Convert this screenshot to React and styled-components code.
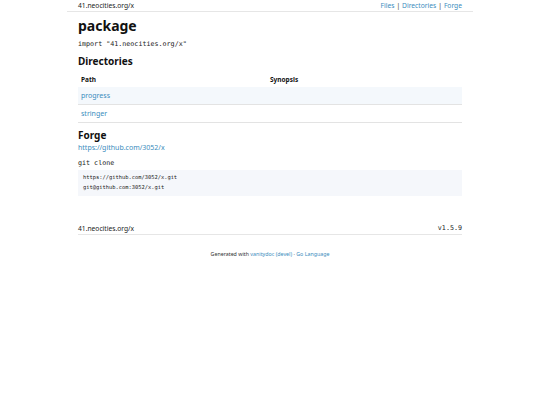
import React from "react";
import styled, { createGlobalStyle } from "styled-components";

const Global = createGlobalStyle`
  html, body { margin: 0; padding: 0; background: #fff; }
  body { font-family: "Noto Sans", "DejaVu Sans", sans-serif; color: #111; }
  a { color: #3a8cbd; text-decoration: none; }
`;

const Header = styled.header`
  width: 406px;
  margin: 0 auto;
  padding: 0 11px;
  box-sizing: border-box;
  height: 12px;
  border-bottom: 1px solid #e6e6e6;
  display: flex;
  justify-content: space-between;
  align-items: center;
  font-size: 6.7px;
  line-height: 11px;
  color: #222;
`;

const Nav = styled.nav`
  display: flex;
  gap: 2px;
  color: #333;
`;

const Main = styled.main`
  width: 384px;
  margin: 0 auto;
`;

const Title = styled.h1`
  font-size: 14px;
  line-height: 16px;
  font-weight: 700;
  margin: 6px 0 0;
`;

const Mono = styled.div`
  font-family: "DejaVu Sans Mono", monospace;
  font-size: 6.7px;
  line-height: 10px;
  margin-top: ${(p) => p.$mt}px;
  color: #222;
`;

const Heading = styled.h2`
  font-size: 10px;
  line-height: 12px;
  font-weight: 700;
  margin: ${(p) => p.$mt}px 0 0;
`;

const Table = styled.table`
  width: 100%;
  border-collapse: collapse;
  table-layout: fixed;
  margin-top: 4px;
  font-size: 7px;
`;

const Th = styled.th`
  width: ${(p) => p.$w || "auto"};
  text-align: left;
  font-weight: 700;
  font-size: 6.5px;
  height: 16px;
  padding: 0 3px;
`;

const Tr = styled.tr`
  background: ${(p) => (p.$alt ? "#f4f8fc" : "#fff")};
  border-bottom: 1px solid #e3e3e3;
`;

const Td = styled.td`
  height: 17px;
  padding: 0 3px;
  line-height: 17px;
`;

const TextLink = styled.a`
  display: block;
  font-size: 7px;
  line-height: 10px;
  margin-top: 2px;
`;

const Code = styled.pre`
  margin: 2px 0 0;
  background: #f5f7fb;
  padding: 2px 5px 4px;
  font-family: "DejaVu Sans Mono", monospace;
  font-size: 5.4px;
  line-height: 10px;
  color: #222;
`;

const Footer = styled.footer`
  width: 384px;
  margin: 27px auto 0;
  display: flex;
  justify-content: space-between;
  align-items: center;
  font-size: 6.7px;
  line-height: 11px;
  border-bottom: 1px solid #e6e6e6;
  color: #222;
`;

const Version = styled.span`
  font-family: "DejaVu Sans Mono", monospace;
  font-size: 6.7px;
`;

const Generated = styled.p`
  margin: 15px 0 0;
  text-align: center;
  font-size: 5.3px;
  line-height: 8px;
  color: #333;
`;

export default function App() {
  return (
    <>
      <Global />
      <Header>
        <span>41.neocities.org/x</span>
        <Nav>
          <a href="#files">Files</a>
          <span>|</span>
          <a href="#dirs">Directories</a>
          <span>|</span>
          <a href="#forge">Forge</a>
        </Nav>
      </Header>
      <Main>
        <Title>package</Title>
        <Mono $mt={5}>import "41.neocities.org/x"</Mono>
        <Heading $mt={6}>Directories</Heading>
        <Table>
          <thead>
            <tr>
              <Th $w="183px">Path</Th>
              <Th>Synopsis</Th>
            </tr>
          </thead>
          <tbody>
            <Tr $alt>
              <Td><a href="#progress">progress</a></Td>
              <Td></Td>
            </Tr>
            <Tr>
              <Td><a href="#stringer">stringer</a></Td>
              <Td></Td>
            </Tr>
          </tbody>
        </Table>
        <Heading $mt={6}>Forge</Heading>
        <TextLink href="#gh">https://github.com/3052/x</TextLink>
        <Mono $mt={5}>git clone</Mono>
        <Code>{"https://github.com/3052/x.git\ngit@github.com:3052/x.git"}</Code>
      </Main>
      <Footer>
        <span>41.neocities.org/x</span>
        <Version>v1.5.9</Version>
      </Footer>
      <Generated>
        Generated with <a href="#v">vanitydoc (devel)</a> · <a href="#go">Go Language</a>
      </Generated>
    </>
  );
}
